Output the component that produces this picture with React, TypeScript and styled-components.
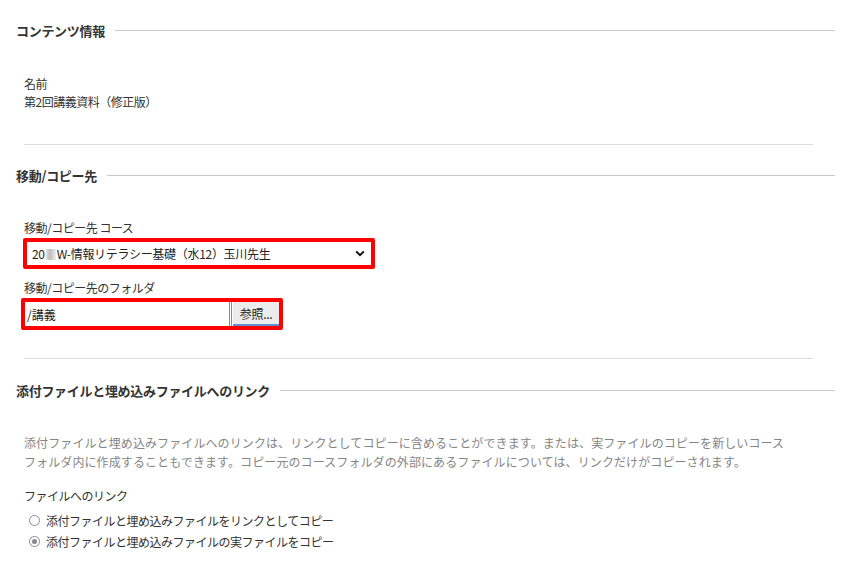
import React from "react";
import styled, { createGlobalStyle } from "styled-components";

const Global = createGlobalStyle`
  html, body { margin: 0; padding: 0; background: #fff; }
  body {
    font-family: "Noto Sans CJK JP", "Noto Sans", sans-serif;
    color: #333;
    font-size: 12px;
  }
`;

const Page = styled.div`
  width: 846px;
  height: 574px;
  overflow: hidden;
  padding: 20px 11px 0 16px;
  box-sizing: border-box;
`;

const Heading = styled.div<{ $mt?: number }>`
  display: flex;
  align-items: center;
  gap: 10px;
  height: 20px;
  margin-top: ${(p) => p.$mt ?? 0}px;
  font-size: 13px;
  font-weight: bold;
  letter-spacing: -0.3px;
  color: #333;
  white-space: nowrap;
  &::after {
    content: "";
    flex: 1;
    height: 1px;
    background: #c8c8c8;
  }
`;

const Body = styled.div`
  padding-left: 8px;
  margin-right: 22px;
`;

const Text = styled.div<{ $mt?: number; $gray?: boolean; $lh?: number }>`
  margin-top: ${(p) => p.$mt ?? 0}px;
  line-height: ${(p) => p.$lh ?? 18}px;
  color: ${(p) => (p.$gray ? "#858585" : "#333")};
  font-size: 12px;
  letter-spacing: ${(p) => (p.$gray ? "0.1px" : "-0.5px")};
  white-space: nowrap;
`;

const Rule = styled.hr<{ $mt: number }>`
  border: 0;
  height: 1px;
  background: #dcdcdc;
  margin: ${(p) => p.$mt}px 0 0 0;
`;

const RedFrame = styled.div<{ $w: number; $mt: number; $ml?: number }>`
  width: ${(p) => p.$w}px;
  margin-top: ${(p) => p.$mt}px;
  margin-left: ${(p) => p.$ml ?? 0}px;
  border: 4px solid #ff0000;
  border-radius: 2px;
  box-sizing: border-box;
  display: flex;
  background: #fff;
`;

const FakeSelect = styled.div`
  flex: 1;
  height: 23px;
  display: flex;
  align-items: center;
  justify-content: space-between;
  padding: 0 6px 0 5px;
  font-size: 12px;
  letter-spacing: -0.3px;
  color: #222;
  white-space: nowrap;
`;

const Blur = styled.span`
  display: inline-block;
  width: 10px;
  height: 11px;
  margin: 0 1px;
  vertical-align: -1px;
  background: linear-gradient(90deg, #e4e4e4, #bdbdbd 40%, #d6d6d6 70%, #eee);
  filter: blur(0.6px);
`;

const TextInput = styled.div`
  flex: 1;
  height: 24px;
  display: flex;
  align-items: center;
  padding-left: 2px;
  font-size: 12px;
  color: #222;
  border-right: 3px double #8d8d8d;
`;

const Browse = styled.button`
  height: 24px;
  width: 46px;
  margin-left: 1px;
  padding: 0;
  border: 0;
  border-bottom: 2px solid #5f8fd0;
  background: #ececec;
  font-family: inherit;
  font-size: 12px;
  letter-spacing: -0.3px;
  color: #222;
`;

const RadioRow = styled.label<{ $mt?: number }>`
  display: flex;
  align-items: center;
  gap: 6px;
  height: 21px;
  margin-top: ${(p) => p.$mt ?? 0}px;
  padding-left: 5px;
  font-size: 12px;
  letter-spacing: -0.5px;
  color: #333;
  white-space: nowrap;
`;

const RadioDot = styled.span<{ $on?: boolean }>`
  width: 9px;
  height: 9px;
  border-radius: 50%;
  border: 1px solid #8c8c8c;
  background: #fff;
  position: relative;
  flex: none;
  &::after {
    content: "";
    display: ${(p) => (p.$on ? "block" : "none")};
    position: absolute;
    left: 2px;
    top: 2px;
    width: 5px;
    height: 5px;
    border-radius: 50%;
    background: #8a8a8a;
  }
`;

const Chevron = () => (
  <svg width="10" height="7" viewBox="0 0 10 7">
    <path d="M1.2 1.4 L5 5.2 L8.8 1.4" fill="none" stroke="#111" strokeWidth="2" />
  </svg>
);

export default function App() {
  return (
    <>
      <Global />
      <Page>
        <Heading>コンテンツ情報</Heading>
        <Body>
          <Text $mt={35}>名前</Text>
          <Text>第2回講義資料（修正版）</Text>
          <Rule $mt={33} />
        </Body>

        <Heading $mt={20}>移動/コピー先</Heading>
        <Body>
          <Text $mt={34}>移動/コピー先 コース</Text>
          <RedFrame $w={352} $mt={1} $ml={-1}>
            <FakeSelect role="combobox">
              <span>
                20<Blur />W-情報リテラシー基礎（水12）玉川先生
              </span>
              <Chevron />
            </FakeSelect>
          </RedFrame>
          <Text $mt={10}>移動/コピー先のフォルダ</Text>
          <RedFrame $w={262} $mt={1} $ml={-3}>
            <TextInput>/講義</TextInput>
            <Browse>参照...</Browse>
          </RedFrame>
          <Rule $mt={28} />
        </Body>

        <Heading $mt={21}>添付ファイルと埋め込みファイルへのリンク</Heading>
        <Body>
          <Text $mt={33} $gray $lh={19}>
            添付ファイルと埋め込みファイルへのリンクは、リンクとしてコピーに含めることができます。または、実ファイルのコピーを新しいコース
            <br />
            フォルダ内に作成することもできます。コピー元のコースフォルダの外部にあるファイルについては、リンクだけがコピーされます。
          </Text>
          <Text $mt={16}>ファイルへのリンク</Text>
          <RadioRow $mt={5}>
            <RadioDot />
            添付ファイルと埋め込みファイルをリンクとしてコピー
          </RadioRow>
          <RadioRow>
            <RadioDot $on />
            添付ファイルと埋め込みファイルの実ファイルをコピー
          </RadioRow>
        </Body>
      </Page>
    </>
  );
}
